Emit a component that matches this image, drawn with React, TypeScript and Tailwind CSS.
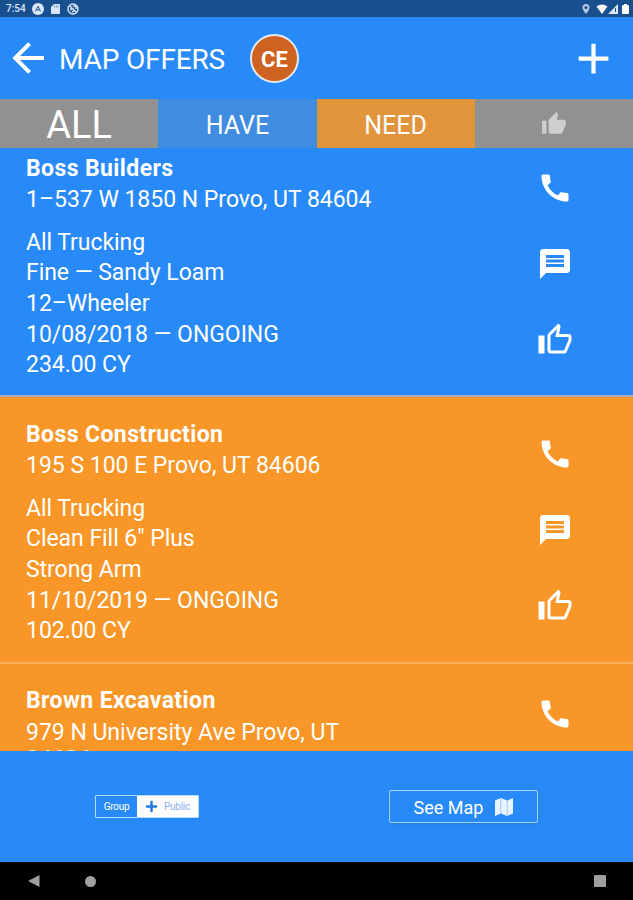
import type { ReactNode } from "react";
import { MdCall, MdMessage, MdThumbUp } from "react-icons/md";
import { FaPlus } from "react-icons/fa";

interface Offer {
  name: string;
  address: string;
  details: string[];
}

const firstOffer: Offer = {
  name: "Boss Builders",
  address: "1–537 W 1850 N Provo, UT 84604",
  details: [
    "All Trucking",
    "Fine — Sandy Loam",
    "12–Wheeler",
    "10/08/2018 — ONGOING",
    "234.00 CY",
  ],
};

const secondOffer: Offer = {
  name: "Boss Construction",
  address: "195 S 100 E Provo, UT 84606",
  details: [
    "All Trucking",
    'Clean Fill 6" Plus',
    "Strong Arm",
    "11/10/2019 — ONGOING",
    "102.00 CY",
  ],
};

const thirdOffer: Offer = {
  name: "Brown Excavation",
  address: "979 N University Ave Provo, UT 84604",
  details: [],
};

function Icon({ d, className }: { d: string; className: string }) {
  return (
    <svg viewBox="0 0 24 24" fill="currentColor" className={className}>
      <path d={d} />
    </svg>
  );
}

function StatusBar() {
  return (
    <div className="flex h-[17px] shrink-0 items-center justify-between bg-[#18508f] pt-px pr-[4px] pl-[6px] text-[#dbe7f8]">
      <div className="flex items-center">
        <span className="w-[26px] text-[10px] leading-none font-medium">7:54</span>
        <svg viewBox="0 0 12 12" className="size-[12px]">
          <circle cx="6" cy="6" r="6" fill="currentColor" />
          <path d="M3.5 8.3 6 3.3l2.5 5M4.7 7h2.6" stroke="#18508f" fill="none" />
        </svg>
        <svg viewBox="0 0 9 10" className="ml-[7px] h-[10px] w-[9px]">
          <path d="M3 0h5q1 0 1 1v8q0 1-1 1H1Q0 10 0 9V3z" fill="currentColor" />
          <path d="M3.5 1.5v2M5.3 1.5v2M7 1.5v2" stroke="#18508f" strokeWidth=".6" />
        </svg>
        <svg viewBox="0 0 12 12" className="ml-[7px] size-[12px]" fill="none" stroke="currentColor">
          <circle cx="6" cy="6" r="5" strokeWidth="1.4" />
          <path d="M3 3l6 6M4 7.5V5M6 3h3v3M5 8.5h2" strokeWidth="1.4" />
        </svg>
      </div>
      <div className="flex items-center">
        <svg viewBox="0 0 8 10" className="mr-[6px] h-[10px] w-[8px]">
          <path d="M4 0a3.5 3.5 0 0 1 3.5 3.5C7.5 6 4 10 4 10S.5 6 .5 3.5A3.5 3.5 0 0 1 4 0z" fill="currentColor" opacity=".8" />
          <circle cx="4" cy="3.6" r="1.5" fill="#18508f" />
        </svg>
        <svg viewBox="0 0 12 10" className="h-[10px] w-[12px]">
          <path d="M.5 2.5Q6-1.5 11.5 2.5L6 10z" fill="#fff" />
        </svg>
        <svg viewBox="0 0 10 10" className="h-[10px] w-[10px]">
          <path d="M10 0v10H0z" fill="currentColor" />
          <path d="M7.5 4v4" stroke="#18508f" />
        </svg>
        <svg viewBox="0 0 7 10" className="ml-[4px] h-[10px] w-[7px]">
          <path d="M2 0h3v1h1q1 0 1 1v7q0 1-1 1H1q-1 0-1-1V2q0-1 1-1h1z" fill="#fff" />
        </svg>
      </div>
    </div>
  );
}

function Tab({ className, children }: { className: string; children: ReactNode }) {
  return (
    <button className={`flex h-full items-center justify-center leading-none ${className}`}>
      {children}
    </button>
  );
}

function OfferCard({ offer, className, actionsClass }: { offer: Offer; className: string; actionsClass: string }) {
  return (
    <article className={`flex shrink-0 justify-between pr-[60px] pl-[26px] ${className}`}>
      <div className="w-[350px] text-[23px] leading-[30.7px] tracking-[-0.05px]">
        <h2 className="font-bold tracking-[0.4px]">{offer.name}</h2>
        <p className="py-[1.85px] leading-[27px] tracking-[-0.02px]">{offer.address}</p>
        <ul className="mt-[12.5px]">
          {offer.details.map((line) => (
            <li key={line}>{line}</li>
          ))}
        </ul>
      </div>
      <div className={`flex flex-col gap-10 ${actionsClass}`}>
        <MdCall className="size-9" />
        <MdMessage className="size-9" />
        <Icon
          className="size-9"
          d="M5 9v12H1V9h4m4 12a2 2 0 0 1-2-2V9c0-.55.22-1.05.59-1.41L14.17 1l1.06 1.06c.27.27.44.64.44 1.05l-.03.32L14.69 8H21a2 2 0 0 1 2 2v2c0 .26-.05.5-.14.73l-3.02 7.05C19.54 20.5 18.83 21 18 21H9m0-2h9.03L21 12v-2h-8.79l1.13-5.32L9 9.03V19z"
        />
      </div>
    </article>
  );
}

export default function App() {
  return (
    <div className="flex h-[900px] w-[633px] flex-col overflow-hidden bg-[#288af9] font-['Roboto',sans-serif] text-white">
      <StatusBar />

      <header className="flex h-[82px] shrink-0 items-center pr-[14px] pl-[4px]">
        <Icon
          className="size-12"
          d="M20,11V13H8L13.5,18.5L12.08,19.92L4.16,12L12.08,4.08L13.5,5.5L8,11H20Z"
        />
        <h1 className="ml-[7px] w-[191px] pt-[3px] text-[28px] leading-none tracking-[-0.15px] whitespace-nowrap">
          MAP OFFERS
        </h1>
        <div className="flex size-[49px] items-center justify-center rounded-full border-2 border-[#e6e9f2] bg-[#ce6220] pt-[2px] text-[22px] font-bold">
          CE
        </div>
        <Icon className="ml-auto size-[51px]" d="M19,13H13V19H11V13H5V11H11V5H13V11H19V13Z" />
      </header>

      <nav className="grid h-[49px] shrink-0 grid-cols-4 grid-rows-1 text-[25px]">
        <Tab className="bg-[#919191] pt-[3px] text-[38px]">ALL</Tab>
        <Tab className="bg-[#3f8ce1] pt-[3px]">HAVE</Tab>
        <Tab className="bg-[#e1943c] pt-[3px]">NEED</Tab>
        <Tab className="bg-[#919191] text-[#cfcfcf]">
          <MdThumbUp className="size-[26px]" />
        </Tab>
      </nav>

      <main className="flex h-[603px] shrink-0 flex-col overflow-hidden">
        <OfferCard
          offer={firstOffer}
          className="h-[249px] border-b-2 border-[#a9adb9] pt-[5.7px]"
          actionsClass="pt-[16.3px]"
        />
        <OfferCard
          offer={secondOffer}
          className="h-[267px] border-b-2 border-[#fcae5d] bg-[#f99628] pt-[22.7px]"
          actionsClass="pt-[16.3px]"
        />
        <OfferCard
          offer={thirdOffer}
          className="h-[267px] bg-[#f99628] pt-[22px]"
          actionsClass="pt-[10px]"
        />
      </main>

      <footer className="flex h-[111px] shrink-0 items-center justify-between pr-[95px] pl-[95px]">
        <div className="flex h-[23px] w-[104px] rounded-[1px] border border-[#b5dcff] text-[10px] tracking-tight">
          <button className="flex w-[41px] items-center justify-center">Group</button>
          <button className="flex flex-1 items-center justify-center gap-[6px] bg-white text-[#8ab0f5]">
            <FaPlus className="size-[13px] text-[#2379e0]" />
            Public
          </button>
        </div>
        <button className="flex h-[33px] w-[149px] items-center justify-center gap-[12px] rounded-[2px] border border-[#a5d3ff] pt-px text-[18px] shadow-sm">
          See Map
          <svg viewBox="0 0 18 18" className="size-[18px]" fill="#e8f4ff">
            <path d="M0 2.5 5.7 0v15.5L0 18zM6.1 0l5.8 2.5V18l-5.8-2.5zM12.3 2.5 18 0v15.5L12.3 18z" />
          </svg>
        </button>
      </footer>

      <div className="flex flex-1 items-center bg-black pr-[27px] pl-[28px] text-[#a0a0a0]">
        <svg viewBox="0 0 12 12" className="size-[12px]" fill="currentColor">
          <path d="M0 6 11.5 0v12z" />
        </svg>
        <span className="ml-[45px] size-[11px] rounded-full bg-[#a0a0a0]" />
        <span className="ml-auto size-[12px] rounded-[1px] bg-[#a0a0a0]" />
      </div>
    </div>
  );
}
